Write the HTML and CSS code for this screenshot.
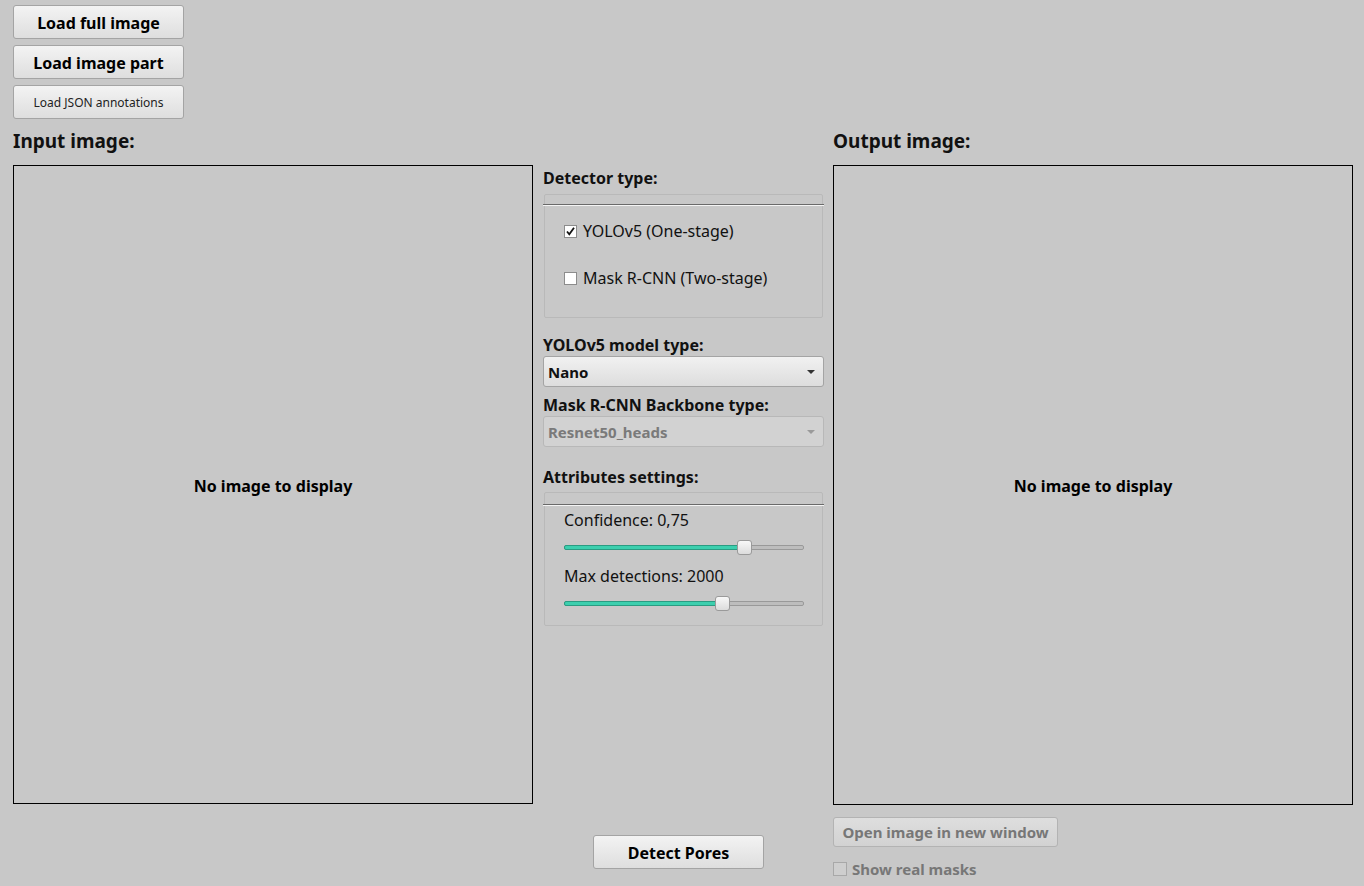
FILE: index.html
```html
<!DOCTYPE html>
<html>
<head>
<meta charset="utf-8">
<link rel="stylesheet" href="styles.css">
</head>
<body>
<div class="app">
  <div class="top-buttons">
    <button class="btn btn-big">Load full image</button>
    <button class="btn btn-big">Load image part</button>
    <button class="btn btn-small">Load JSON annotations</button>
  </div>
  <div class="main">
    <div class="col-left">
      <div class="title">Input image:</div>
      <div class="image-box">No image to display</div>
    </div>
    <div class="col-mid">
      <div class="mid-top">
        <div class="label">Detector type:</div>
        <div class="group">
          <div class="group-line"></div>
          <div class="checks">
            <div class="check-row"><span class="cb checked"><svg width="11" height="11" viewBox="0 0 11 11"><path d="M2 5.5 L4.3 8.3 L9 1.8" fill="none" stroke="#111" stroke-width="1.8"/></svg></span><span>YOLOv5 (One-stage)</span></div>
            <div class="check-row"><span class="cb"></span><span>Mask R-CNN (Two-stage)</span></div>
          </div>
        </div>
        <div class="label label-model">YOLOv5 model type:</div>
        <div class="combo"><span>Nano</span><span class="arrow"></span></div>
        <div class="label label-backbone">Mask R-CNN Backbone type:</div>
        <div class="combo disabled"><span>Resnet50_heads</span><span class="arrow"></span></div>
        <div class="label label-attr">Attributes settings:</div>
        <div class="group group-attr">
          <div class="group-line"></div>
          <div class="sliders">
            <div class="slider-label">Confidence: 0,75</div>
            <div class="slider"><div class="fill" style="width: 180px"></div><div class="handle" style="left: 172px"></div></div>
            <div class="slider-label">Max detections: 2000</div>
            <div class="slider"><div class="fill" style="width: 158px"></div><div class="handle" style="left: 150px"></div></div>
          </div>
        </div>
      </div>
      <div class="mid-bottom">
        <button class="btn btn-big detect">Detect Pores</button>
      </div>
    </div>
    <div class="col-right">
      <div class="title">Output image:</div>
      <div class="image-box out">No image to display</div>
      <button class="btn btn-open" disabled>Open image in new window</button>
      <div class="show-masks"><span class="cb cb-disabled"></span><span>Show real masks</span></div>
    </div>
  </div>
</div>
</body>
</html>
```

FILE: styles.css
```css
* { box-sizing: border-box; }
html, body { margin: 0; padding: 0; }
body {
  background: #c8c8c8;
  font-family: "Noto Sans", "Open Sans", sans-serif;
  color: #000;
  width: 1364px;
  height: 886px;
  overflow: hidden;
}
.app { padding: 5px 0 0 13px; }

.top-buttons { display: flex; flex-direction: column; gap: 6px; width: 171px; }

.btn {
  font-family: "Noto Sans", sans-serif;
  background: linear-gradient(#f3f3f3, #dedede);
  border: 1px solid #a4a4a4;
  border-radius: 3px;
  color: #000;
  padding: 0;
  cursor: default;
}
.btn-big { height: 34px; font-size: 16px; font-weight: bold; width: 171px; padding-top: 1px; }
.btn-small { height: 34px; font-size: 12px; font-weight: normal; width: 171px; color: #222; }

.main {
  display: grid;
  grid-template-columns: 530px 290px 520px;
  margin-top: 6px;
}
.title {
  height: 40px;
  line-height: 32px;
  font-size: 19px;
  font-weight: bold;
  color: #111;
}
.image-box {
  width: 520px;
  height: 639px;
  border: 1px solid #000;
  display: flex;
  align-items: center;
  justify-content: center;
  font-size: 16px;
  font-weight: bold;
  padding-top: 2px;
}
.image-box.out { height: 640px; }

.col-mid {
  padding-top: 40px;
}
.mid-top { width: 281px; height: 640px; padding-top: 3px; }
.label { font-size: 16px; font-weight: bold; line-height: 21px; color: #111; }

.group {
  margin: 5px 1px 0 1px;
  height: 124px;
  border: 1px solid #b9b9b9;
  border-radius: 2px;
  padding-top: 9px;
}
.group-line {
  height: 2px;
  margin: 0 -2px;
  border-top: 1px solid #6a6a6a;
  border-bottom: 1px solid #f4f4f4;
}
.checks { padding: 14px 0 0 19px; display: flex; flex-direction: column; gap: 25px; }
.check-row { display: flex; align-items: center; gap: 6px; font-size: 16px; line-height: 22px; color: #111; }
.cb {
  width: 13px; height: 13px;
  background: #fff;
  border: 1px solid #8c8c8c;
  display: inline-flex; align-items: center; justify-content: center;
  flex-shrink: 0;
}

.label-model { margin-top: 17px; }
.combo {
  margin-top: 0;
  height: 31px;
  border: 1px solid #a4a4a4;
  border-radius: 3px;
  background: linear-gradient(#f1f1f1, #dddddd);
  display: flex; align-items: center; justify-content: space-between;
  padding: 0 8px 0 4px;
  font-size: 15px; font-weight: bold; color: #111;
}
.combo .arrow {
  width: 0; height: 0;
  border-left: 4px solid transparent;
  border-right: 4px solid transparent;
  border-top: 4px solid #333;
  margin-top: 1px;
}
.combo.disabled { background: #d2d2d2; border-color: #b8b8b8; color: #7a7a7a; }
.combo.disabled .arrow { border-top-color: #9a9a9a; }
.label-backbone { margin-top: 8px; }
.label-attr { margin-top: 20px; }
.group-attr { height: 134px; margin-top: 4px; padding-top: 11px; }

.sliders { padding: 3px 18px 0 19px; }
.slider-label { font-size: 16px; line-height: 22px; color: #111; }
.slider {
  position: relative;
  height: 5px;
  margin: 14px 0 15px 0;
  background: #bdbdbd;
  border: 1px solid #999;
  border-radius: 2px;
}
.fill {
  position: absolute; left: -1px; top: -1px; bottom: -1px;
  background: #3ccfae;
  border: 1px solid #2a9c82;
  border-radius: 2px;
}
.handle {
  position: absolute;
  top: -6px;
  width: 15px; height: 15px;
  background: linear-gradient(#f8f8f8, #dcdcdc);
  border: 1px solid #9a9a9a;
  border-radius: 3px;
}

.mid-bottom { display: flex; justify-content: center; padding-top: 30px; padding-right: 19px; }
.mid-bottom .detect { width: 171px; height: 34px; }

.col-right { display: flex; flex-direction: column; }
.btn-open {
  margin-top: 12px;
  width: 225px;
  height: 30px;
  font-size: 15px;
  font-weight: bold;
  color: #777;
  background: linear-gradient(#dedede, #d2d2d2);
  border-color: #b3b3b3;
}
.show-masks {
  margin-top: 12px;
  display: flex; align-items: center; gap: 5px;
  font-size: 15px; font-weight: bold; color: #777;
}
.cb-disabled { background: #cecece; border-color: #a8a8a8; width: 14px; height: 14px; }
```
